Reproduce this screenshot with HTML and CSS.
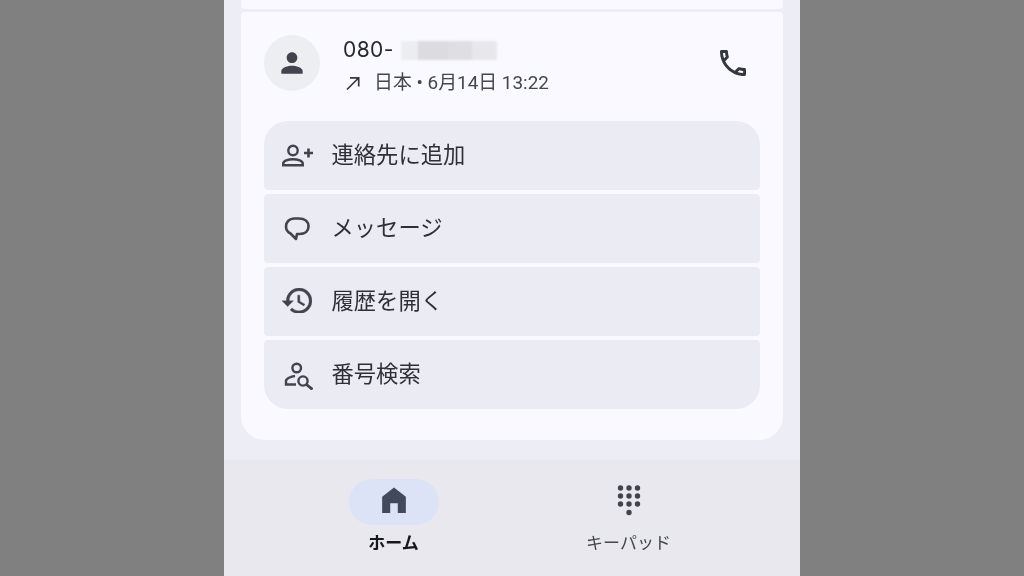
FILE: index.html
```html
<!DOCTYPE html>
<html lang="ja">
<head>
<meta charset="utf-8">
<title>通話履歴</title>
<link rel="stylesheet" href="styles.css">
</head>
<body>
<div class="phone">
  <main class="content">
    <div class="card-prev"></div>
    <section class="card">
      <header class="call">
        <div class="avatar">
          <svg viewBox="0 0 24 24" width="32" height="32"><path fill="#41444c" d="M12 12c2.200 0 4-1.800 4-4s-1.800-4-4-4-4 1.800-4 4 1.800 4 4 4zm0 2c-2.700 0-8 1.300-8 4v2h16v-2c0-2.700-5.300-4-8-4z"/></svg>
        </div>
        <div class="info">
          <div class="number">080-<span class="redact"><i class="r1"></i><i class="r2"></i><i class="r3"></i><i class="r4"></i></span></div>
          <div class="meta">
            <svg class="arrow" viewBox="0 0 18 18" width="18" height="18"><path fill="none" stroke="#35383f" stroke-width="1.700" d="M3 15.500 14.500 4M6 3.800h8.700v8.700"/></svg>
            <span>日本 • 6月14日 13:22</span>
          </div>
        </div>
        <svg class="phone-icon" viewBox="3 3 18 18" width="26" height="26"><path fill="#35383f" d="M6.540 5c.06.89.21 1.760.45 2.590l-1.200 1.200c-.41-1.200-.67-2.470-.76-3.790h1.510m9.860 12.020c.85.24 1.720.39 2.600.45v1.490c-1.320-.09-2.590-.35-3.800-.75l1.200-1.190M7.500 3H4c-.55 0-1 .45-1 1 0 9.390 7.610 17 17 17 .55 0 1-.45 1-1v-3.490c0-.55-.45-1-1-1-1.240 0-2.450-.2-3.570-.57-.1-.04-.21-.05-.31-.05-.26 0-.51.1-.71.29l-2.200 2.200c-2.830-1.450-5.150-3.760-6.590-6.590l2.200-2.200c.28-.28.36-.67.25-1.020C8.700 6.450 8.500 5.250 8.500 4c0-.55-.45-1-1-1z"/></svg>
      </header>
      <ul class="actions">
        <li class="action">
          <span class="ico"><svg viewBox="0 0 32 26" width="32" height="26"><g fill="none" stroke="#41444c" stroke-width="2.400"><circle cx="12" cy="7.500" r="4.700"/><path d="M2.200 22.300v-1.500c0-3 5-4.500 9.800-4.500s9.800 1.500 9.800 4.500v1.500z"/><path d="M27.500 5.500v9M23 10h9" stroke-width="2.600"/></g></svg></span>
          <span class="text">連絡先に追加</span>
        </li>
        <li class="action">
          <span class="ico"><svg viewBox="0 0 32 26" width="32" height="26"><path fill="none" stroke="#41444c" stroke-width="2.600" stroke-linejoin="round" d="M13 2.500h5c5.500 0 9.500 3 9.500 8 0 4.500-3.500 7.500-9 7.500h-2.500l-1 5-5.500-5.500C6.300 16 5 13.500 5 10.500c0-4.700 3.500-8 8-8z"/></svg></span>
          <span class="text">メッセージ</span>
        </li>
        <li class="action">
          <span class="ico"><svg class="clock" viewBox="1 3 21 18" width="30" height="25.700"><path fill="#41444c" stroke="#41444c" stroke-width="0.250" d="M13 3c-4.970 0-9 4.030-9 9H1l3.890 3.890.07.14L9 12H6c0-3.870 3.130-7 7-7s7 3.130 7 7-3.130 7-7 7c-1.930 0-3.680-.79-4.940-2.060l-1.420 1.420C8.270 19.990 10.510 21 13 21c4.970 0 9-4.030 9-9s-4.030-9-9-9zm-1 5v5l4.280 2.540.72-1.210-3.500-2.080V8H12z"/></svg></span>
          <span class="text">履歴を開く</span>
        </li>
        <li class="action">
          <span class="ico"><svg viewBox="0 0 32 30" width="32" height="30"><g fill="none" stroke="#41444c" stroke-width="2.400"><circle cx="15.700" cy="8" r="4.300"/><path d="M14 16c-4 .5-9 2.500-9 5v3.500h10"/><circle cx="22" cy="21" r="4.600"/><path d="m25.500 24.500 6 5" stroke-width="2.800"/></g></svg></span>
          <span class="text">番号検索</span>
        </li>
      </ul>
    </section>
  </main>
  <nav class="nav">
    <div class="tab active">
      <div class="pill"><svg viewBox="0 0 24 26" width="26" height="28"><path fill="#41495e" d="M12 1.500 1 10v15h7.500v-9h7v9H23V10z"/></svg></div>
      <div class="label">ホーム</div>
    </div>
    <div class="tab">
      <div class="pill"><svg viewBox="0 0 26 32" width="26" height="32"><g fill="#41444c"><circle cx="4.500" cy="4" r="2.700"/><circle cx="13" cy="4" r="2.700"/><circle cx="21.500" cy="4" r="2.700"/><circle cx="4.500" cy="12" r="2.700"/><circle cx="13" cy="12" r="2.700"/><circle cx="21.500" cy="12" r="2.700"/><circle cx="4.500" cy="20" r="2.700"/><circle cx="13" cy="20" r="2.700"/><circle cx="21.500" cy="20" r="2.700"/><circle cx="13" cy="28.500" r="2.700"/></g></svg></div>
      <div class="label">キーパッド</div>
    </div>
  </nav>
</div>
</body>
</html>
```
FILE: styles.css
```css
* { box-sizing: border-box; margin: 0; padding: 0; }
html, body { height: 576px; overflow: hidden; }
body {
  background: #808080;
  font-family: "Roboto", "Noto Sans CJK JP", sans-serif;
  color: #2e3036;
  display: flex;
  justify-content: center;
}
.phone {
  width: 576px;
  height: 576px;
  background: #edeef5;
  display: flex;
  flex-direction: column;
}
.content {
  flex: 1;
  padding: 0 17px;
  display: flex;
  flex-direction: column;
  gap: 3px;
}
.card-prev {
  height: 9px;
  background: #f9f9ff;
  border-radius: 0 0 4px 4px;
}
.card {
  height: 428px;
  background: #f9f9ff;
  border-radius: 4px 4px 24px 24px;
  padding: 0 23px;
}
.call {
  height: 109px;
  display: flex;
  align-items: flex-start;
}
.avatar {
  width: 56px;
  height: 56px;
  margin-top: 23px;
  border-radius: 50%;
  background: #edeef2;
  display: flex;
  align-items: center;
  justify-content: center;
}
.avatar, .info, .phone-icon, .ico, .text, .tab { filter: blur(0.35px); }
.info {
  flex: 1;
  margin: 25px 0 0 23px;
  display: flex;
  flex-direction: column;
  gap: 8px;
}
.number {
  display: flex;
  align-items: center;
  font-family: "Inter", "Roboto", sans-serif;
  font-size: 21px;
  line-height: 26px;
  letter-spacing: 0.400px;
  color: #26282c;
}
.redact { display: flex; height: 19px; margin-left: 7px; filter: blur(1px); }
.redact i { display: block; height: 19px; }
.r1 { width: 17px; background: #ecedf1; }
.r2 { width: 30px; background: #dcdce0; }
.r3 { width: 24px; background: #dfdfe3; }
.r4 { width: 25px; background: #e8e8ec; }
.meta {
  display: flex;
  align-items: center;
  gap: 12px;
  font-size: 18.900px;
  line-height: 24px;
  color: #44474e;
}
.arrow { margin-left: 1px; }
.phone-icon { margin: 38px 14px 0 0; }
.actions {
  list-style: none;
  display: flex;
  flex-direction: column;
  gap: 4px;
}
.action {
  height: 69px;
  background: #ebecf3;
  border-radius: 4px;
  display: flex;
  align-items: center;
  padding-left: 17px;
  font-size: 22.300px;
  color: #2e3036;
}
.action:first-child { border-radius: 24px 24px 4px 4px; }
.action:last-child { border-radius: 4px 4px 24px 24px; }
.ico {
  width: 50.500px;
  flex: none;
  display: flex;
  align-items: center;
}
.clock { margin: 0 0 2px 1px; }
.text { margin-bottom: 6px; }
.nav {
  height: 116px;
  background: #e8e8ee;
  display: flex;
  justify-content: center;
  gap: 145px;
  padding: 19px 2px 0 0;
}
.tab {
  width: 90px;
  display: flex;
  flex-direction: column;
  align-items: center;
}
.pill {
  width: 90px;
  height: 46px;
  border-radius: 23px;
  display: flex;
  align-items: center;
  justify-content: center;
}
.pill svg { margin-bottom: 4px; }
.active .pill { background: #dde3f6; }
.label {
  margin-top: 6px;
  font-size: 17px;
  line-height: 24px;
  white-space: nowrap;
  color: #44474e;
}
.active .label { font-weight: 700; color: #16171a; }
```
